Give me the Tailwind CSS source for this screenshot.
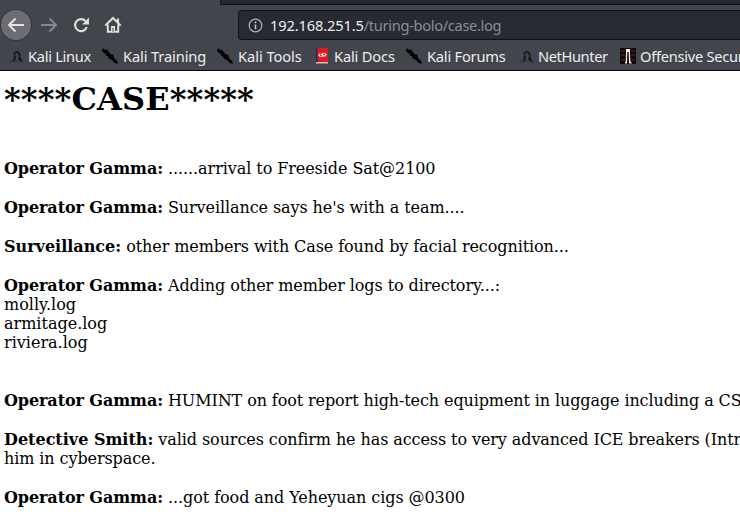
<!DOCTYPE html>
<html lang="en">
<head>
<meta charset="utf-8">
<title>case.log</title>
<script src="https://cdn.jsdelivr.net/npm/@tailwindcss/browser@4"></script>
</head>
<body class="w-[740px] h-[522px] overflow-hidden bg-white flex flex-col">
<svg class="hidden">
  <symbol id="dragon" viewBox="0 0 16 16"><path d="M4 13l1.500-1.500L6 7.500 5.500 5 8 3l3 .5 1.500 3v3l2.500 4-3-.5L10 11l1-3-1-3-2.500 0L7 7l1 2-.5 3-2 1.500z" fill="#15171a"/><path d="M1 14.500c4-2 9-2 14.500 0" fill="none" stroke="#303338"/></symbol>
  <symbol id="knife" viewBox="0 0 16 16"><path d="M0 1l1 0 0-1 2 2 2-.5 2 3 2 2 2 0 1 3 1 2 2 1 1 3-2 0-2-1-1-2-2-1-2-1-1-2-2-1-1-2-2-1-1-2z" fill="#000"/><path d="M3 5l3 2M9 8l2 2" stroke="#23252a" stroke-width=".7"/></symbol>
</svg>
<header class="shrink-0 h-[71px] bg-[#42454c] border-b border-[#08080c] flex flex-col text-[#eeeeec]" style="font-family:'Noto Sans',sans-serif">
  <div class="h-[5px] flex shrink-0"><div class="w-[220px]"></div><div class="flex-1 bg-[#252731] border-b border-l border-[#101115]"></div></div>
  <div class="h-[39px] shrink-0 flex pt-[5px]">
    <div class="w-[238px] shrink-0 flex -mt-[1px] h-[32px] items-center">
      <svg class="w-[32px] h-[32px] shrink-0" viewBox="0 0 32 32" fill="none"><circle cx="16" cy="16" r="15.7" fill="#6b6d72" stroke="#303238" stroke-width="1"/><path d="M24 16H9.5M15.5 9.5L9 16l6.500 6.500" stroke="#e2e3e0" stroke-width="2"/></svg>
      <svg class="w-[32px] h-[32px] shrink-0 ml-[1px]" viewBox="0 0 32 32" fill="none"><path d="M8 16h14.500M16.500 9.500L23 16l-6.500 6.500" stroke="#85878a" stroke-width="2"/></svg>
      <svg class="w-[32px] h-[32px] shrink-0" viewBox="0 0 32 32" fill="none"><path d="M20.500 12A6 6 0 1 0 21.800 18" stroke="#deded9" stroke-width="2.2"/><path d="M24 8.500v7h-7z" fill="#deded9"/></svg>
      <svg class="w-[32px] h-[32px] shrink-0" viewBox="0 0 32 32" fill="none"><path d="M8.300 16.500L16 9l7.700 7.500M10.800 15.500v7.300h10.400v-7.300M21 9.500v4" stroke="#deded9" stroke-width="2"/><path d="M14 17h4v5.500h-4z" fill="#deded9"/><path d="M15.500 19h1v3.500h-1z" fill="#42454c"/></svg>
    </div>
    <div class="flex-1 h-[30px] bg-[#272933] border border-r-0 border-[#111217] rounded-l-[4px] flex items-center pl-[9px] overflow-hidden">
      <svg class="w-[15px] h-[15px] shrink-0" viewBox="0 0 15 15" fill="none"><circle cx="7.500" cy="7.500" r="6.300" stroke="#b1b2b3" stroke-width="1.2"/><path d="M7.500 6.500v4.800M7.500 3.500v1.700" stroke="#c1c2c3" stroke-width="1.6"/></svg>
      <span class="ml-[7px] text-[14.67px] leading-[20px] whitespace-nowrap text-[#8d8e90] tracking-[-0.33px]"><span class="text-[#eeeeec] tracking-[-0.15px]">192.168.251.5</span>/turing-bolo/case.log</span>
    </div>
  </div>
  <nav class="h-[24px] flex pl-[8px] text-[14.67px] leading-[22px] whitespace-nowrap">
    <div class="w-[94px] shrink-0 flex items-center gap-[4px] tracking-[-0.3px]"><svg class="size-[16px] shrink-0"><use href="#dragon"/></svg><span>Kali Linux</span></div>
    <div class="w-[115px] shrink-0 flex items-center gap-[5px] tracking-[-0.12px]"><svg class="size-[16px] shrink-0"><use href="#knife"/></svg><span>Kali Training</span></div>
    <div class="w-[97px] shrink-0 flex items-center gap-[5px] tracking-[-0.05px]"><svg class="size-[16px] shrink-0"><use href="#knife"/></svg><span>Kali Tools</span></div>
    <div class="w-[92px] shrink-0 flex items-center gap-[4px] tracking-[-0.17px]"><svg class="size-[16px] shrink-0" viewBox="0 0 16 16" fill="none"><path d="M2 0h12v14H2z" fill="#dc1c20"/><path d="M2 0h1.500v14H2z" fill="#202956"/><path d="M2 14h12v1.500H2z" fill="#c8c5c5"/><path d="M6.300 5.500L4.800 7.200l1.700 1.500M10.500 5.200L12 6.800l-1.500 1.700M9.500 5.200L7.600 6.500l1.800 1.200-1.800 1.200" stroke="#fff" stroke-width="1.1"/></svg><span>Kali Docs</span></div>
    <div class="w-[112px] shrink-0 flex items-center gap-[5px] tracking-[-0.22px]"><svg class="size-[16px] shrink-0"><use href="#knife"/></svg><span>Kali Forums</span></div>
    <div class="w-[102px] shrink-0 flex items-center gap-[4px] tracking-[-0.4px]"><svg class="size-[16px] shrink-0"><use href="#dragon"/></svg><span>NetHunter</span></div>
    <div class="w-[150px] shrink-0 flex items-center gap-[4px] tracking-[-0.27px]"><svg class="size-[16px] shrink-0" viewBox="0 0 16 16" fill="none"><path d="M0 0h16v16H0z" fill="#180608"/><path d="M0 3h5M11 3h4M1 7h4M11 7h5M1 12h4M12 12h3" stroke="#413034"/><path d="M6 1h4v5l.5 8h1v1.500H9L8.700 4H7.300l-.3 11.500H5V14h.7L6 6z" fill="#f3eee6"/></svg><span>Offensive Security</span></div>
  </nav>
</header>
<main class="flex-1 pl-[4px] pt-[9px] text-black text-[16px] leading-[19px] tracking-[-0.09px] whitespace-nowrap" style="font-family:'DejaVu Serif',serif">
  <h1 class="text-[32px] leading-[38px] font-bold tracking-[0.12px]">****CASE*****</h1>
  <p class="mt-[41px] tracking-[-0.07px]"><b class="tracking-[-0.09px]">Operator Gamma:</b> ......arrival to Freeside Sat@2100</p>
  <p class="mt-[20px]"><b>Operator Gamma:</b> Surveillance says he's with a team....</p>
  <p class="mt-[20px]"><b class="tracking-normal">Surveillance:</b> other members with Case found by facial recognition...</p>
  <p class="mt-[20px]"><b>Operator Gamma:</b> Adding other member logs to directory...:<br><span class="tracking-normal">molly.log</span><br><span class="tracking-normal">armitage.log</span><br><span class="tracking-normal">riviera.log</span></p>
  <p class="mt-[39px] tracking-[-0.105px]"><b class="tracking-[-0.09px]">Operator Gamma:</b> HUMINT on foot report high-tech equipment in luggage including a CS</p>
  <p class="mt-[20px]"><b class="tracking-normal">Detective Smith:</b> valid sources confirm he has access to very advanced ICE breakers (Intr<br>him in cyberspace.</p>
  <p class="mt-[20px] tracking-[-0.07px]"><b class="tracking-[-0.09px]">Operator Gamma:</b> ...got food and Yeheyuan cigs @0300</p>
</main>
</body>
</html>
